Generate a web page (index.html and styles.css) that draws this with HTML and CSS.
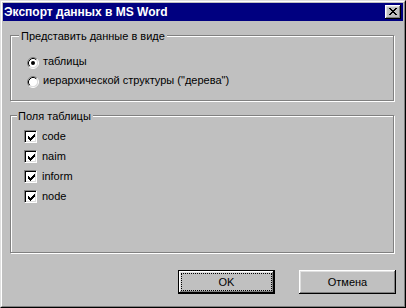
FILE: index.html
```html
<!DOCTYPE html>
<html>
<head>
<meta charset="utf-8">
<title>Экспорт данных в MS Word</title>
<link rel="stylesheet" href="styles.css">
</head>
<body>
<div class="window">
  <div class="frame">
    <div class="titlebar">
      <span class="title">Экспорт данных в MS Word</span>
      <button class="close" type="button" aria-label="Закрыть">
        <svg width="16" height="14" viewBox="0 0 16 14" shape-rendering="crispEdges"><path fill="#000" d="M4 3h2v1h-2zM10 3h2v1h-2zM5 4h2v1h-2zM9 4h2v1h-2zM6 5h4v1h-4zM7 6h2v1h-2zM6 7h4v1h-4zM5 8h2v1h-2zM9 8h2v1h-2zM4 9h2v1h-2zM10 9h2v1h-2z"/></svg>
      </button>
    </div>
    <div class="content">
      <div class="group group-view">
        <span class="legend legend-view">Представить данные в виде</span>
        <div class="row radio-row">
          <span class="radio">
            <svg width="12" height="12" viewBox="0 0 12 12"><circle cx="6" cy="6" r="4.5" fill="#fff"/><path d="M2.11 9.89A5.5 5.5 0 0 1 9.89 2.11" fill="none" stroke="#808080"/><path d="M9.89 2.11A5.5 5.5 0 0 1 2.11 9.89" fill="none" stroke="#fff"/><path d="M2.82 9.18A4.5 4.5 0 0 1 9.18 2.82" fill="none" stroke="#000"/><path d="M9.18 2.82A4.5 4.5 0 0 1 2.82 9.18" fill="none" stroke="#dfdfdf"/><circle cx="6" cy="6" r="2" fill="#000"/></svg>
          </span>
          <span class="radio-text">таблицы</span>
        </div>
        <div class="row radio-row">
          <span class="radio">
            <svg width="12" height="12" viewBox="0 0 12 12"><circle cx="6" cy="6" r="4.5" fill="#fff"/><path d="M2.11 9.89A5.5 5.5 0 0 1 9.89 2.11" fill="none" stroke="#808080"/><path d="M9.89 2.11A5.5 5.5 0 0 1 2.11 9.89" fill="none" stroke="#fff"/><path d="M2.82 9.18A4.5 4.5 0 0 1 9.18 2.82" fill="none" stroke="#000"/><path d="M9.18 2.82A4.5 4.5 0 0 1 2.82 9.18" fill="none" stroke="#dfdfdf"/></svg>
          </span>
          <span class="radio-text">иерархической структуры ("дерева")</span>
        </div>
      </div>
      <div class="group group-fields">
        <span class="legend legend-fields">Поля таблицы</span>
        <div class="row check-row">
          <span class="check"><svg width="7" height="7" viewBox="0 0 7 7" shape-rendering="crispEdges"><path fill="#000" d="M6 0h1v1h-1zM5 1h2v1h-2zM0 2h1v1h-1zM4 2h3v1h-3zM0 3h2v1h-2zM3 3h3v1h-3zM0 4h5v1h-5zM1 5h3v1h-3zM2 6h1v1h-1z"/></svg></span>
          <span class="check-text">code</span>
        </div>
        <div class="row check-row">
          <span class="check"><svg width="7" height="7" viewBox="0 0 7 7" shape-rendering="crispEdges"><path fill="#000" d="M6 0h1v1h-1zM5 1h2v1h-2zM0 2h1v1h-1zM4 2h3v1h-3zM0 3h2v1h-2zM3 3h3v1h-3zM0 4h5v1h-5zM1 5h3v1h-3zM2 6h1v1h-1z"/></svg></span>
          <span class="check-text">naim</span>
        </div>
        <div class="row check-row">
          <span class="check"><svg width="7" height="7" viewBox="0 0 7 7" shape-rendering="crispEdges"><path fill="#000" d="M6 0h1v1h-1zM5 1h2v1h-2zM0 2h1v1h-1zM4 2h3v1h-3zM0 3h2v1h-2zM3 3h3v1h-3zM0 4h5v1h-5zM1 5h3v1h-3zM2 6h1v1h-1z"/></svg></span>
          <span class="check-text">inform</span>
        </div>
        <div class="row check-row">
          <span class="check"><svg width="7" height="7" viewBox="0 0 7 7" shape-rendering="crispEdges"><path fill="#000" d="M6 0h1v1h-1zM5 1h2v1h-2zM0 2h1v1h-1zM4 2h3v1h-3zM0 3h2v1h-2zM3 3h3v1h-3zM0 4h5v1h-5zM1 5h3v1h-3zM2 6h1v1h-1z"/></svg></span>
          <span class="check-text">node</span>
        </div>
      </div>
      <div class="buttons">
        <button class="btn btn-default" type="button">OK</button>
        <button class="btn" type="button">Отмена</button>
      </div>
    </div>
  </div>
</div>
</body>
</html>
```
FILE: styles.css
```css
html, body {
  margin: 0;
  padding: 0;
  background: #c0c0c0;
}
body {
  font-family: "Liberation Sans", Arial, sans-serif;
  font-size: 11px;
  color: #000;
}
.window {
  width: 406px;
  height: 308px;
  box-sizing: border-box;
  border: 1px solid;
  border-color: #dfdfdf #000 #000 #dfdfdf;
}
.frame {
  height: 100%;
  box-sizing: border-box;
  border: 1px solid;
  border-color: #fff #808080 #808080 #fff;
  padding: 1px;
  display: flex;
  flex-direction: column;
}
.titlebar {
  height: 18px;
  flex: none;
  background: #000080;
  display: flex;
  align-items: center;
  justify-content: space-between;
  padding: 0 2px 0 1px;
}
.title {
  color: #fff;
  font-weight: bold;
  font-size: 12px;
  line-height: 18px;
  white-space: nowrap;
}
.close {
  width: 16px;
  height: 14px;
  padding: 0;
  border: 0;
  background: #c0c0c0;
  display: block;
  box-shadow: inset -1px -1px #000, inset 1px 1px #fff, inset -2px -2px #808080, inset 2px 2px #dfdfdf;
}
.close svg {
  display: block;
}
.content {
  flex: 1;
  padding: 14px 7px 0 7px;
  display: flex;
  flex-direction: column;
}
.group {
  position: relative;
  box-sizing: border-box;
  margin-right: 2px;
  border: 1px solid #808080;
  box-shadow: inset 1px 1px 0 #fff, 1px 1px 0 #fff;
}
.group-view {
  height: 66px;
  padding: 18px 0 0 16px;
}
.group-fields {
  height: 138px;
  margin-top: 14px;
  padding: 13px 0 0 13px;
}
.legend {
  position: absolute;
  top: -6px;
  line-height: 13px;
  background: #c0c0c0;
  white-space: nowrap;
}
.legend-view {
  left: 8px;
  padding: 0 2px 0 2px;
}
.legend-fields {
  left: 6px;
  padding: 0 2px 0 1px;
}
.row {
  display: flex;
  align-items: flex-start;
}
.radio-row {
  height: 19px;
}
.radio {
  width: 12px;
  height: 12px;
  margin-top: 3px;
  flex: none;
}
.radio svg {
  display: block;
}
.radio-text {
  margin-left: 4px;
  line-height: 15px;
  white-space: nowrap;
}
.check-row {
  height: 20px;
}
.check {
  width: 13px;
  height: 13px;
  box-sizing: border-box;
  margin-top: 1px;
  flex: none;
  border: 1px solid;
  border-color: #808080 #fff #fff #808080;
  background: #fff;
  box-shadow: inset 1px 1px #000, inset -1px -1px #dfdfdf;
  display: flex;
  align-items: center;
  justify-content: center;
}
.check svg {
  display: block;
  margin: 1px 0 0 1px;
}
.check-text {
  margin-left: 5px;
  line-height: 15px;
}
.buttons {
  margin-top: 17px;
  display: flex;
  justify-content: flex-end;
  gap: 24px;
}
.btn {
  width: 97px;
  height: 24px;
  padding: 0;
  border: 0;
  background: #c0c0c0;
  font-family: "Liberation Sans", Arial, sans-serif;
  font-size: 11px;
  color: #000;
  box-shadow: inset -1px -1px #000, inset 1px 1px #fff, inset -2px -2px #808080, inset 2px 2px #dfdfdf;
}
.btn-default {
  box-shadow: inset 0 0 0 1px #000, inset -2px -2px #000, inset 2px 2px #fff, inset -3px -3px #808080, inset 3px 3px #dfdfdf;
  outline: 1px dotted #000;
  outline-offset: -4px;
}
```
